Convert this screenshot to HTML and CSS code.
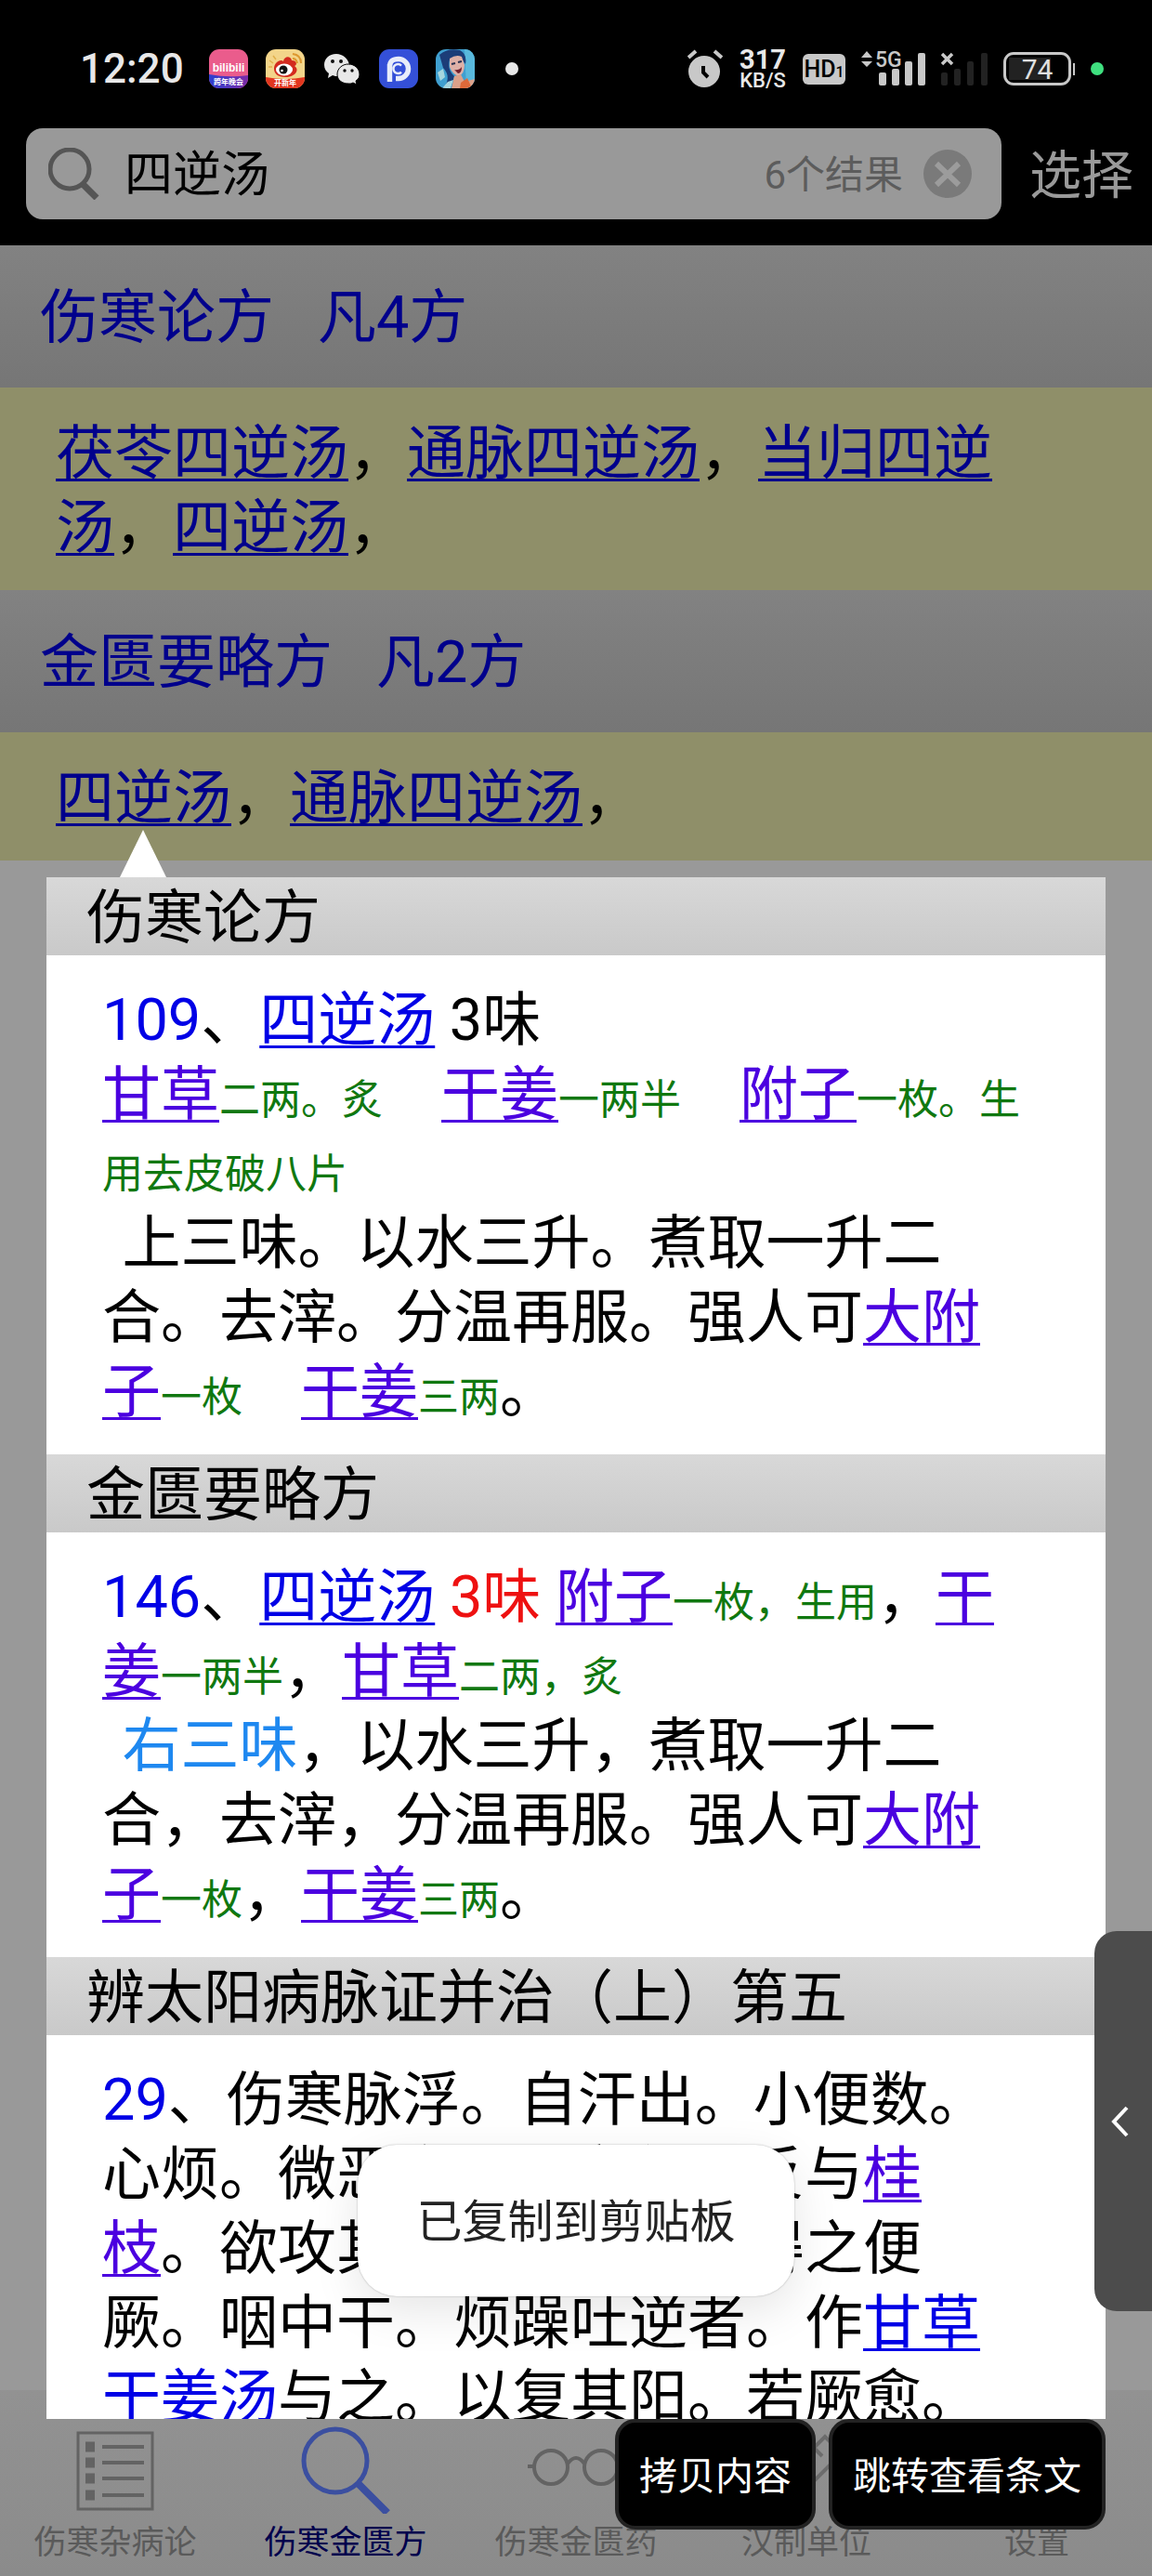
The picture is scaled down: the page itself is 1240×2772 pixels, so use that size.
FILE: index.html
```html
<!DOCTYPE html>
<html lang="zh-CN">
<head>
<meta charset="utf-8">
<meta name="viewport" content="width=device-width, initial-scale=1">
<title>伤寒金匮方</title>
<link rel="stylesheet" href="styles.css">
</head>

<body>
<div class="app">
	<header>
		<div class="status">
			<span class="clock">12:20</span>
			<div class="notices">
				<svg width="42" height="42" viewBox="0 0 42 42">
					<defs>
						<clipPath id="round"><rect width="42" height="42" rx="11"/></clipPath>
						<linearGradient id="bili" x1="0" x2="1"><stop offset="0" stop-color="#2b3fd0"/><stop offset="1" stop-color="#7d2ba8"/></linearGradient>
					</defs>
					<g clip-path="url(#round)">
						<rect width="42" height="42" fill="#ea5c8c"/>
						<path d="M0 27Q21 31 42 28V42H0z" fill="url(#bili)"/>
						<text x="21" y="24" class="bili-name">bilibili</text>
						<text x="21" y="38" class="icon-cap">跨年晚会</text>
					</g>
				</svg>
				<svg width="42" height="42" viewBox="0 0 42 42">
					<g clip-path="url(#round)">
						<rect width="42" height="42" fill="#f3d58a"/>
						<path d="M0 30Q21 34 42 30V42H0z" fill="#e2361f"/>
						<path d="M9 21C9 14 16 10 19 13C20 7 27 7 28 12C34 12 34 17 31 18C37 22 32 30 21 30C13 30 9 26 9 21z" fill="#d32a1e"/>
						<ellipse cx="20" cy="22" rx="9" ry="6.500" fill="#fff"/>
						<circle cx="19" cy="22" r="4.500" fill="#111"/>
						<circle cx="17.500" cy="23" r="1.300" fill="#fff"/>
						<path d="M29 5Q38 6 38 15M29 10Q33 10 34 15" fill="none" stroke="#dd982f" stroke-width="2"/>
						<path d="M4 12l4 3M8 7l3 4M3 19h4" stroke="#e2b04c" stroke-width="1.500"/>
						<text x="21" y="39" class="icon-cap">开新年</text>
					</g>
				</svg>
				<svg width="42" height="42" viewBox="0 0 42 42">
					<path d="M15 5C7 5 2 10 2 17c0 4 2 7 5 9l-1 5 5-3c2 1 4 1 6 1 1-8 6-12 12-12C28 10 22 5 15 5z" fill="#e8e8e8"/>
					<path d="M28 16c-7 0-12 5-12 11s5 10 12 10c2 0 3 0 5-1l4 2-1-4c3-2 4-4 4-7 0-6-5-11-12-11z" fill="#e8e8e8" stroke="#000" stroke-width="1"/>
					<g fill="#111"><circle cx="11" cy="13" r="2"/><circle cx="20" cy="13" r="2"/><circle cx="24" cy="23" r="1.700"/><circle cx="32" cy="23" r="1.700"/></g>
				</svg>
				<svg width="42" height="42" viewBox="0 0 42 42">
					<rect width="42" height="42" rx="11" fill="#3450d8"/>
					<path d="M11.500 35V16M11.500 18C12 11 17 10.500 21 10.500a10.500 10.500 0 0 1 0 21h-3" fill="none" stroke="#e8edfa" stroke-width="5.500"/>
					<path d="M15.500 35V20" stroke="#3450d8" stroke-width="1.500"/>
					<path d="M24 17.500a5 5 0 1 0 0 7" fill="none" stroke="#e8edfa" stroke-width="2.500"/>
				</svg>
				<svg width="42" height="42" viewBox="0 0 42 42">
					<g clip-path="url(#round)">
						<rect width="42" height="42" fill="#3f9fd0"/>
						<path d="M31 0H42V42H33z" fill="#59b8dc"/>
						<path d="M4 6Q13-2 26 1Q34 5 32 16L27 9L15 11Q12 22 20 29L16 42H9Q17 29 8 20z" fill="#1c3d78"/>
						<path d="M15 10Q22 5 28 8L31 17Q31 26 25 29Q18 27 15 19z" fill="#deb0a7"/>
						<path d="M17 16l4-1M24 14l4-1" stroke="#29304f" stroke-width="2"/>
						<path d="M20 22Q25 23 28 19Q28 26 24 26z" fill="#71202d"/>
						<path d="M20 29L27 27L31 35L42 32V42H17z" fill="#dca18a"/>
						<path d="M27 36L34 31L39 42H26z" fill="#df6939"/>
						<path d="M2 25L8 21L10 30L5 34zM13 35L19 33L16 42H7z" fill="#a7d6df"/>
					</g>
				</svg>
			</div>
			<span class="dot"></span>

			<div class="signals">
				<svg width="38" height="42" viewBox="0 0 38 42">
					<circle cx="18" cy="24" r="17" fill="#c8c8c8"/>
					<path d="M1 9l8-7M37 9l-8-7" stroke="#c8c8c8" stroke-width="4"/>
					<path d="M17 18v7l5 5" fill="none" stroke="#000" stroke-width="4"/>
				</svg>
				<div class="speed"><b>317</b><span>KB/S</span></div>
				<span class="hd">HD<small>1</small></span>
				<svg width="69" height="42" viewBox="0 0 69 42">
					<g fill="#c8c8c8">
						<path d="M0 9l6-7 6 7zM0 13h12l-6 6z"/>
						<rect x="19" y="25" width="8" height="14" rx="2"/>
						<rect x="33" y="21" width="8" height="18" rx="2"/>
						<rect x="47" y="13" width="8" height="26" rx="2"/>
						<rect x="61" y="4" width="8" height="35" rx="2"/>
						<text x="15" y="19" class="net">5G</text>
					</g>
				</svg>
				<svg width="50" height="42" viewBox="0 0 50 42">
					<path d="M1 5l11 11M12 5L1 16" stroke="#c8c8c8" stroke-width="3.500"/>
					<g fill="#222">
						<rect x="0" y="25" width="7" height="14" rx="2"/>
						<rect x="14" y="21" width="7" height="18" rx="2"/>
						<rect x="28" y="13" width="7" height="26" rx="2"/>
						<rect x="43" y="4" width="7" height="35" rx="2"/>
					</g>
				</svg>
				<div class="battery"><span>74</span></div>
				<span class="dot green"></span>
			</div>
		</div>

		<form class="search">
			<div class="search-box">
				<svg width="56" height="56" viewBox="0 0 56 56" fill="none" stroke="#555">
					<circle cx="23" cy="23" r="21" stroke-width="5"/>
					<path d="M37 39l15 15" stroke-width="7"/>
				</svg>
				<input type="text" value="四逆汤" aria-label="搜索">
				<span class="count">6个结果</span>
				<button type="button" class="clear" aria-label="清除">
					<svg width="52" height="52" viewBox="0 0 52 52">
						<circle cx="26" cy="26" r="26" fill="#7a7a7a"/>
						<path d="M14 15l24 23M38 15L14 38" stroke="#9c9c9c" stroke-width="6"/>
					</svg>
				</button>
			</div>
			<button type="button" class="select">选择</button>
		</form>
	</header>

	<main>
		<h2>伤寒论方&nbsp;&nbsp; 凡4方</h2>
		<p><a href="#">茯苓四逆汤</a>，<a href="#">通脉四逆汤</a>，<a href="#">当归四逆汤</a>，<a href="#">四逆汤</a>，</p>
		<h2>金匮要略方&nbsp;&nbsp; 凡2方</h2>
		<p><a href="#">四逆汤</a>，<a href="#">通脉四逆汤</a>，</p>
	</main>

	<nav>
		<a href="#">
			<svg width="84" height="100" viewBox="0 0 84 100" fill="none" stroke="#636363" stroke-width="3">
				<path d="M2 13H82V95H2z"/>
				<path d="M28 28H73M28 45H73M28 62H73M28 80H73" stroke-width="4"/>
				<path d="M10 28H20M10 45H20M10 62H20M10 80H20" stroke-width="11"/>
			</svg>
			<span>伤寒杂病论</span>
		</a>
		<a href="#" class="current">
			<svg width="96" height="100" viewBox="0 0 96 100" fill="none" stroke="#3b4fa0">
				<circle cx="37" cy="43" r="34" stroke-width="5"/>
				<path d="M62 68L93 99" stroke-width="8"/>
			</svg>
			<span>伤寒金匮方</span>
		</a>
		<a href="#">
			<svg width="108" height="100" viewBox="0 0 108 100" fill="none" stroke="#636363" stroke-width="4">
				<circle cx="27" cy="50" r="18"/>
				<circle cx="81" cy="50" r="18"/>
				<path d="M45 46q9-12 18 0M9 49H2M99 49h7"/>
			</svg>
			<span>伤寒金匮药</span>
		</a>
		<a href="#">
			<svg width="96" height="100" viewBox="0 0 96 100" fill="none" stroke="#6c6c6c" stroke-width="4">
				<path d="M16 69L68 17L86 35L34 87zM28 57l9 9M42 43l9 9M56 29l9 9"/>
			</svg>
			<span>汉制单位</span>
		</a>
		<a href="#">
			<svg width="84" height="100" viewBox="0 0 84 100" fill="none" stroke="#636363" stroke-width="4">
				<circle cx="42" cy="50" r="26"/>
				<circle cx="42" cy="50" r="10"/>
			</svg>
			<span>设置</span>
		</a>
	</nav>

	<section class="popup">
		<h3>伤寒论方</h3>
		<div class="entry">
			<i>109</i>、<a href="#">四逆汤</a> 3味<br>
			<a href="#" class="herb">甘草</a><small>二两。炙</small>　<a href="#" class="herb">干姜</a><small>一两半</small>　<a href="#" class="herb">附子</a><small>一枚。生用去皮破八片</small><br>
			&emsp13;上三味。以水三升。煮取一升二合。去滓。分温再服。强人可<a href="#" class="herb">大附子</a><small>一枚</small>　<a href="#" class="herb">干姜</a><small>三两</small>。
		</div>
		<h3>金匮要略方</h3>
		<div class="entry">
			<i>146</i>、<a href="#">四逆汤</a> <span class="red">3味</span> <a href="#" class="herb">附子</a><small>一枚，生用</small>，<a href="#" class="herb">干姜</a><small>一两半</small>，<a href="#" class="herb">甘草</a><small>二两，炙</small><br>
			&emsp13;<span class="note">右三味</span>，以水三升，煮取一升二合，去滓，分温再服。强人可<a href="#" class="herb">大附子</a><small>一枚</small>，<a href="#" class="herb">干姜</a><small>三两</small>。
		</div>
		<h3>辨太阳病脉证并治（上）第五</h3>
		<div class="entry">
			<i>29</i>、伤寒脉浮。自汗出。小便数。心烦。微恶寒。脚挛急。反与<a href="#" class="herb">桂枝</a>。欲攻其表。此误也。得之便厥。咽中干。烦躁吐逆者。作<a href="#">甘草干姜汤</a>与之。以复其阳。若厥愈。
		</div>
	</section>

	<div class="actions">
		<button type="button">拷贝内容</button>
		<button type="button">跳转查看条文</button>
	</div>

	<div class="toast"><span>已复制到剪贴板</span></div>

	<button type="button" class="drawer" aria-label="展开">
		<svg width="20" height="36" viewBox="0 0 20 36" fill="none" stroke="#fff" stroke-width="4"><path d="M17 3L3 18L17 33"/></svg>
	</button>
</div>
</body>
</html>
```

FILE: styles.css
```css
* {
	box-sizing: border-box;
}

body {
	margin: 0;
	background: #999;
	font-family: Roboto, "Noto Sans CJK SC", sans-serif;
	font-size: 63px;
	line-height: 80px;
	text-spacing-trim: space-all;
}

a {
	color: #0000e6;
	text-decoration-thickness: 3px;
	text-underline-offset: 6px;
	text-decoration-skip-ink: none;
}

button {
	border: 0;
	padding: 0;
	background: none;
	font: inherit;
	cursor: pointer;
}

svg {
	display: block;
	flex: none;
}

.app {
	position: relative;
	display: flex;
	flex-direction: column;
	min-height: 100vh;
	overflow: hidden;
}

/* status bar */
header {
	height: 264px;
	background: #000;
}

.status {
	display: flex;
	align-items: center;
	height: 138px;
	padding: 10px 52px 0 86px;
	color: #e8e8e8;
}

.clock {
	width: 139px;
	font-size: 44px;
	font-weight: 500;
}

.notices {
	display: flex;
	gap: 19px;
	margin-right: 33px;
}

.bili-name {
	font: bold 12px "Liberation Sans", sans-serif;
	fill: #fff;
	text-anchor: middle;
}

.icon-cap {
	font: bold 8px "Noto Sans CJK SC", sans-serif;
	fill: #fff;
	text-anchor: middle;
}

.dot {
	width: 14px;
	height: 14px;
	border-radius: 50%;
	background: #e8e8e8;
}

.green {
	background: #3fe07f;
}

.signals {
	display: flex;
	align-items: center;
	gap: 17px;
	margin-left: auto;
}

.speed {
	display: flex;
	flex-direction: column;
	align-items: center;
	width: 52px;
	font-size: 22px;
	font-weight: 500;
	line-height: 20px;
}

.speed b {
	font-size: 29px;
	line-height: 26px;
}

.hd {
	width: 46px;
	height: 33px;
	border-radius: 6px;
	background: #c8c8c8;
	color: #000;
	font-size: 25px;
	font-weight: 500;
	line-height: 33px;
	text-align: center;
}

.hd small {
	font-size: 16px;
}

.net {
	font: 500 23px Roboto, sans-serif;
}

.battery {
	position: relative;
	width: 73px;
	height: 36px;
	margin-right: 4px;
	padding: 3px;
	border: 3px solid #c8c8c8;
	border-radius: 11px;
	color: #e0e0e0;
	font-size: 30px;
	line-height: 25px;
	text-align: center;
	background: linear-gradient(#222, #222) 3px 3px / 45px 24px no-repeat;
}

.battery span {
	display: block;
}

.battery::after {
	content: "";
	position: absolute;
	right: -7px;
	top: 9px;
	width: 2px;
	height: 13px;
	background: #c8c8c8;
}

/* search bar */
.search {
	display: flex;
	align-items: center;
	gap: 30px;
	height: 98px;
	margin: 0;
	padding: 0 20px 0 28px;
}

.search-box {
	flex: 1;
	display: flex;
	align-items: center;
	height: 98px;
	padding: 0 32px 0 24px;
	border-radius: 18px;
	background: #999;
}

.search-box input {
	flex: 1;
	min-width: 0;
	margin: 0 0 0 26px;
	padding: 4px 0 0;
	border: 0;
	outline: 0;
	background: none;
	color: #000;
	font: inherit;
	font-size: 52px;
}

.count {
	padding-top: 4px;
	color: #5c5c5c;
	font-size: 42px;
}

.clear {
	margin-left: 22px;
}

.select {
	padding-top: 4px;
	color: #999;
	font-size: 56px;
}

/* result list */
main {
	flex: 1;
}

h2, h3, main p {
	margin: 0;
	font-weight: normal;
}

h2 {
	padding: 38px 43px 35px;
	background: linear-gradient(#828282, #767676);
	color: #00008c;
	font-size: 63px;
}

main p {
	padding: 31px 60px 27px;
	background: #8f8f69;
}

main a {
	color: #00008c;
}

/* bottom tabs */
nav {
	display: flex;
	height: 200px;
	background: linear-gradient(#929292, #8b8b8b);
}

nav a {
	flex: 1;
	display: flex;
	flex-direction: column;
	align-items: center;
	padding-top: 33px;
	color: #5a5a5a;
	font-size: 35px;
	line-height: 64px;
	text-decoration: none;
}

nav .current {
	color: #00004d;
}

/* popup with the matching formulas */
.popup {
	position: absolute;
	top: 944px;
	right: 50px;
	bottom: 169px;
	left: 50px;
	overflow: hidden;
	background: #fff;
}

.app::before {
	content: "";
	position: absolute;
	top: 893px;
	left: 129px;
	border: 25px solid transparent;
	border-top: 0;
	border-bottom: 51px solid #fff;
}

h3 {
	padding: 4px 43px 0;
	background: linear-gradient(#d8d8d8, #c9c9c9);
	font-size: 63px;
}

.entry {
	padding: 30px 80px 27px 60px;
}

.entry i {
	color: #0000e6;
	font-style: normal;
}

.entry small {
	color: #107810;
	font-size: 44px;
	line-height: 44px;
}

.entry .herb {
	color: #4b00e0;
}

.red {
	color: #ee1111;
}

.note {
	color: #1e88f0;
}

.actions {
	position: absolute;
	right: 50px;
	bottom: 50px;
	display: flex;
	gap: 14px;
}

.actions button {
	height: 119px;
	padding: 4px 22px 0;
	border: 4px solid #222;
	border-radius: 22px;
	background: #000;
	color: #fff;
	font-size: 41px;
}

.toast {
	position: absolute;
	right: 0;
	bottom: 301px;
	left: 0;
	display: flex;
	justify-content: center;
}

.toast span {
	padding: 44px 63px 39px;
	border-radius: 42px;
	background: #fff;
	box-shadow: 0 0 2px rgba(0, 0, 0, .3), 0 16px 50px rgba(0, 0, 0, .1);
	color: #222;
	font-size: 49px;
}

.drawer {
	position: absolute;
	right: 0;
	bottom: 285px;
	display: flex;
	align-items: center;
	width: 62px;
	height: 409px;
	padding-left: 18px;
	border-radius: 24px 0 0 24px;
	background: #4c4c4c;
}
```
